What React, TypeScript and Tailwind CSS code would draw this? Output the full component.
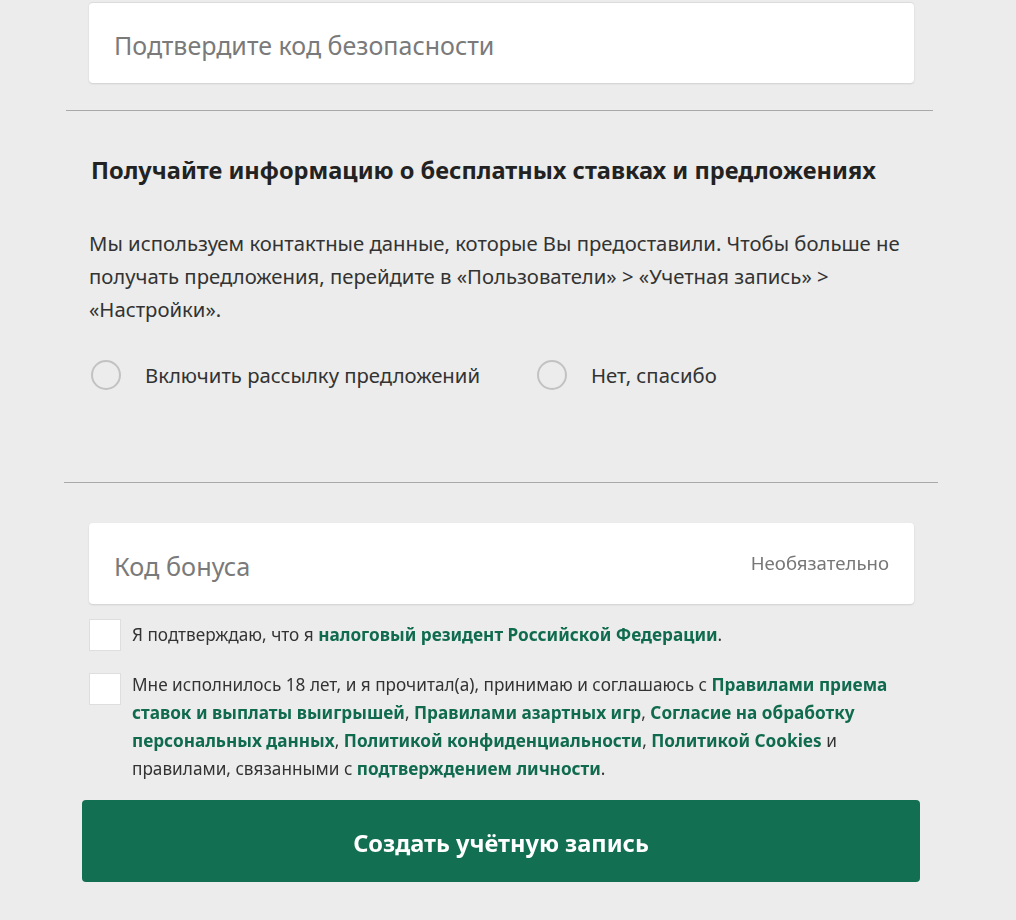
import React, { useState } from 'react'

const font = { fontFamily: '"Noto Sans", "Open Sans", Arial, sans-serif' }

function Link({ children }: { children: React.ReactNode }) {
  return <a className="font-bold text-[#0f6a4e] cursor-pointer">{children}</a>
}

function Radio({ label, checked, onClick }: { label: string; checked: boolean; onClick: () => void }) {
  return (
    <label className="flex items-center cursor-pointer" onClick={onClick}>
      <span className="flex h-[30px] w-[30px] items-center justify-center rounded-full border-2 border-[#c2c2c2]">
        {checked && <span className="h-[14px] w-[14px] rounded-full bg-[#136f52]" />}
      </span>
      <span className="ml-[24px] text-[20.3px] text-[#333]">{label}</span>
    </label>
  )
}

export default function App() {
  const [offers, setOffers] = useState<'yes' | 'no' | null>(null)

  return (
    <div className="min-h-[920px] bg-[#ebeceb] pt-[2px]" style={font}>
      <div className="ml-[89px] w-[825px]">
        <div className="flex h-[81px] items-center rounded-[4px] border-t border-[#dcdcdc] bg-white px-[25px] pt-[5px] shadow-[0_1px_2px_rgba(0,0,0,0.12)]">
          <input
            className="w-full bg-transparent text-[25px] text-[#333] outline-none placeholder:text-[#7a7a7a]"
            placeholder="Подтвердите код безопасности"
          />
        </div>
      </div>

      <div className="ml-[66px] mt-[27px] h-px w-[867px] bg-[#a9a9a9]" />

      <div className="ml-[89px] w-[825px]">
        <h2 className="ml-[2px] mt-[45px] text-[23.6px] font-bold leading-[28px] text-[#222]">
          Получайте информацию о бесплатных ставках и предложениях
        </h2>
        <p className="mt-[43px] text-[20.3px] leading-[33px] text-[#333]">
          Мы используем контактные данные, которые Вы предоставили. Чтобы больше не получать предложения,
          перейдите в «Пользователи» &gt; «Учетная запись» &gt; «Настройки».
        </p>
        <div className="ml-[2px] mt-[34px] flex gap-[57px]">
          <Radio label="Включить рассылку предложений" checked={offers === 'yes'} onClick={() => setOffers('yes')} />
          <Radio label="Нет, спасибо" checked={offers === 'no'} onClick={() => setOffers('no')} />
        </div>
      </div>

      <div className="ml-[64px] mt-[92px] h-px w-[874px] bg-[#a9a9a9]" />

      <div className="ml-[89px] w-[825px]">
        <div className="mt-[40px] flex h-[81px] items-center rounded-[4px] bg-white px-[25px] pt-[6px] shadow-[0_1px_2px_rgba(0,0,0,0.12)]">
          <input
            autoFocus
            className="flex-1 bg-transparent text-[25.3px] text-[#333] caret-[#222] outline-none placeholder:text-[#7a7a7a]"
            placeholder="Код бонуса"
          />
          <span className="mb-[8px] text-[18.6px] text-[#777]">Необязательно</span>
        </div>

        <label className="mt-[15px] flex items-center">
          <span className="h-[32px] w-[32px] shrink-0 border border-[#dedede] bg-white" />
          <span className="ml-[11px] text-[17.2px] leading-[28px] text-[#333]">
            Я подтверждаю, что я <Link>налоговый резидент Российской Федерации</Link>.
          </span>
        </label>

        <label className="mt-[20px] flex items-start">
          <span className="mt-[2px] h-[32px] w-[32px] shrink-0 border border-[#dedede] bg-white" />
          <span className="ml-[11px] pr-[10px] text-[17.2px] leading-[28px] text-[#333]">
            Мне исполнилось 18 лет, и я прочитал(а), принимаю и соглашаюсь с{' '}
            <Link>Правилами приема ставок и выплаты выигрышей</Link>, <Link>Правилами азартных игр</Link>,{' '}
            <Link>Согласие на обработку персональных данных</Link>, <Link>Политикой конфиденциальности</Link>,{' '}
            <Link>Политикой Cookies</Link> и правилами, связанными с <Link>подтверждением личности</Link>.
          </span>
        </label>
      </div>

      <button
        type="button"
        className="ml-[82px] mt-[17px] flex h-[82px] w-[838px] items-center justify-center rounded-[4px] bg-[#136f52] pt-[4px] text-[23.6px] font-bold text-white"
      >
        Создать учётную запись
      </button>
    </div>
  )
}
